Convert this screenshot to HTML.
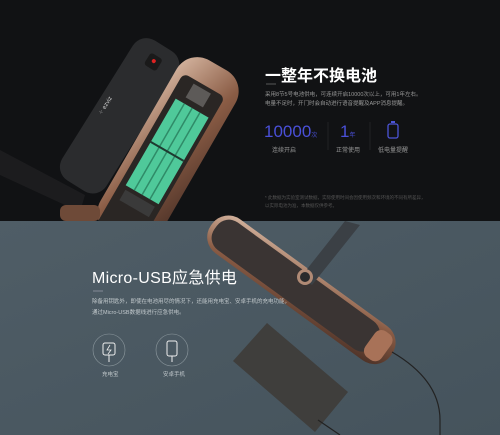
<!DOCTYPE html>
<html><head><meta charset="utf-8"><style>
body{margin:0;width:500px;height:435px;overflow:hidden;font-family:"Liberation Sans","Noto Sans CJK SC",sans-serif;}
.t{position:absolute;white-space:nowrap;}
</style></head><body>
<svg width="500" height="435" style="position:absolute;left:0;top:0">
<defs>
<linearGradient id="br" x1="0" y1="0" x2="1" y2="1"><stop offset="0" stop-color="#d7b7a2"/><stop offset=".5" stop-color="#8a5c45"/><stop offset="1" stop-color="#4a3026"/></linearGradient>
<linearGradient id="bg2" x1="0" y1="0" x2="1" y2="1"><stop offset="0" stop-color="#4f5d66"/><stop offset="1" stop-color="#45535c"/></linearGradient>
<clipPath id="tc"><rect width="500" height="221"/></clipPath>
</defs>
<rect width="500" height="222" fill="#111214"/>
<rect y="221" width="500" height="214" fill="url(#bg2)"/>
<g clip-path="url(#tc)">
<!-- cover -->
<g transform="translate(122,112) rotate(32)">
<rect x="-26" y="-78" width="52" height="165" rx="16" fill="#2b2c2e"/>
<rect x="-7" y="-66" width="14" height="14" rx="3" fill="#1a1a1a"/>
<circle cx="0" cy="-60" r="2" fill="#d22"/>
</g>
<text x="98" y="115" fill="#ccc" font-size="6" transform="rotate(-58 100 112)">⁘ ezviz</text>
<!-- lock body -->
<g transform="translate(172,145) rotate(30)">
<rect x="-34" y="-92" width="68" height="200" rx="24" fill="url(#br)"/>
<rect x="-26" y="-68" width="48" height="175" rx="6" fill="#2a2624"/>
<rect x="-20" y="-42" width="38" height="100" fill="#4fc99a"/>
<g stroke="#2f8b68" stroke-width="1.5"><line x1="-10" y1="-42" x2="-10" y2="58"/><line x1="-1" y1="-42" x2="-1" y2="58"/><line x1="8" y1="-42" x2="8" y2="58"/><line x1="-20" y1="8" x2="18" y2="8" stroke="#1e3a30" stroke-width="2"/></g>
<rect x="-12" y="-64" width="20" height="16" fill="#5d5a58"/>
<rect x="-18" y="62" width="34" height="12" fill="#3a3a3a"/>
</g>
<!-- handle -->
<path d="M0 150 L85 195 L80 212 L0 175Z" fill="#1c1c1e"/>
<rect x="60" y="205" width="40" height="16" rx="6" fill="#6e4a38"/>
</g>
<!-- bottom: lock plate -->
<g transform="rotate(36 300 290)">
<rect x="190" y="268" width="222" height="42" rx="20" fill="url(#br)"/>
<rect x="195" y="272" width="198" height="34" rx="15" fill="#3a3433"/>
<rect x="386" y="273" width="20" height="32" rx="8" fill="#a87258"/>
</g>
<path d="M300 278 L345 221 L360 225 L312 285Z" fill="#3b4045"/>
<circle cx="305" cy="277" r="8" fill="#b08a75"/><circle cx="305" cy="277" r="5" fill="#2a2a2c"/>
<!-- powerbank -->
<polygon points="267,323 348,392 315,432 233,361" fill="#3f3e3c"/>
<path d="M392 352 Q440 380 440 420 L440 435" stroke="#222" stroke-width="1.2" fill="none"/>
<path d="M318 420 L340 435" stroke="#222" stroke-width="1.2"/>
<!-- icons -->
<g fill="none" stroke="#8d999f" stroke-width=".6"><circle cx="109" cy="350" r="16"/><circle cx="172" cy="350" r="16"/></g>
<g fill="none" stroke="#eee" stroke-width="1"><rect x="103" y="343" width="12" height="12" rx="2"/><rect x="167" y="341" width="10" height="15" rx="2"/><line x1="109" y1="355" x2="109" y2="362"/><line x1="172" y1="356" x2="172" y2="362"/></g>
<path d="M110 345 L107 350 L111 350 L108 354" stroke="#eee" stroke-width=".8" fill="none"/>
<!-- battery icon -->
<rect x="388" y="124" width="10" height="14" rx="2" fill="none" stroke="#4c55d8" stroke-width="1.3"/>
<rect x="391" y="121" width="4" height="2" fill="#4c55d8"/>
<line x1="266" y1="84" x2="276" y2="84" stroke="#888" stroke-width=".6"/>
<line x1="93" y1="291" x2="103" y2="291" stroke="#aab" stroke-width=".6"/>
<line x1="328" y1="122" x2="328" y2="150" stroke="#333" stroke-width=".5"/>
<line x1="370" y1="122" x2="370" y2="150" stroke="#333" stroke-width=".5"/>
</svg>
<div class="t" style="left:265px;top:62px;font-size:16px;font-weight:bold;color:#fff">一整年不换电池</div>
<div class="t" style="left:265px;top:91px;font-size:5.5px;color:#999;line-height:9px">采用8节5号电池供电，可连续开启10000次以上，可用1年左右。<br>电量不足时，开门时会自动进行语音提醒及APP消息提醒。</div>
<div class="t" style="left:264px;top:122px;font-size:17px;color:#4a50d8">10000<span style="font-size:6px">次</span></div>
<div class="t" style="left:340px;top:122px;font-size:17px;color:#4a50d8">1<span style="font-size:6px">年</span></div>
<div class="t" style="left:272px;top:145px;font-size:6px;color:#999">连续开启</div>
<div class="t" style="left:336px;top:145px;font-size:6px;color:#999">正常使用</div>
<div class="t" style="left:378px;top:145px;font-size:6px;color:#999">低电量提醒</div>
<div class="t" style="left:265px;top:194px;font-size:4.5px;color:#555;line-height:8px">* 此数据为实验室测试数据，实际使用时间会因使用频次和环境的不同有所差异，<br>以实际电池为准，本数据仅供参考。</div>
<div class="t" style="left:92px;top:264px;font-size:16px;color:#fff;letter-spacing:.3px">Micro-USB应急供电</div>
<div class="t" style="left:92px;top:297px;font-size:5.5px;color:#c3cacd;line-height:11px">除备用钥匙外，即使在电池用尽的情况下，还能用充电宝、安卓手机的充电功能，<br>通过Micro-USB数据线进行应急供电。</div>
<div class="t" style="left:102px;top:370px;font-size:5.5px;color:#c3cacd">充电宝</div>
<div class="t" style="left:163px;top:370px;font-size:5.5px;color:#c3cacd">安卓手机</div>
</body></html>
